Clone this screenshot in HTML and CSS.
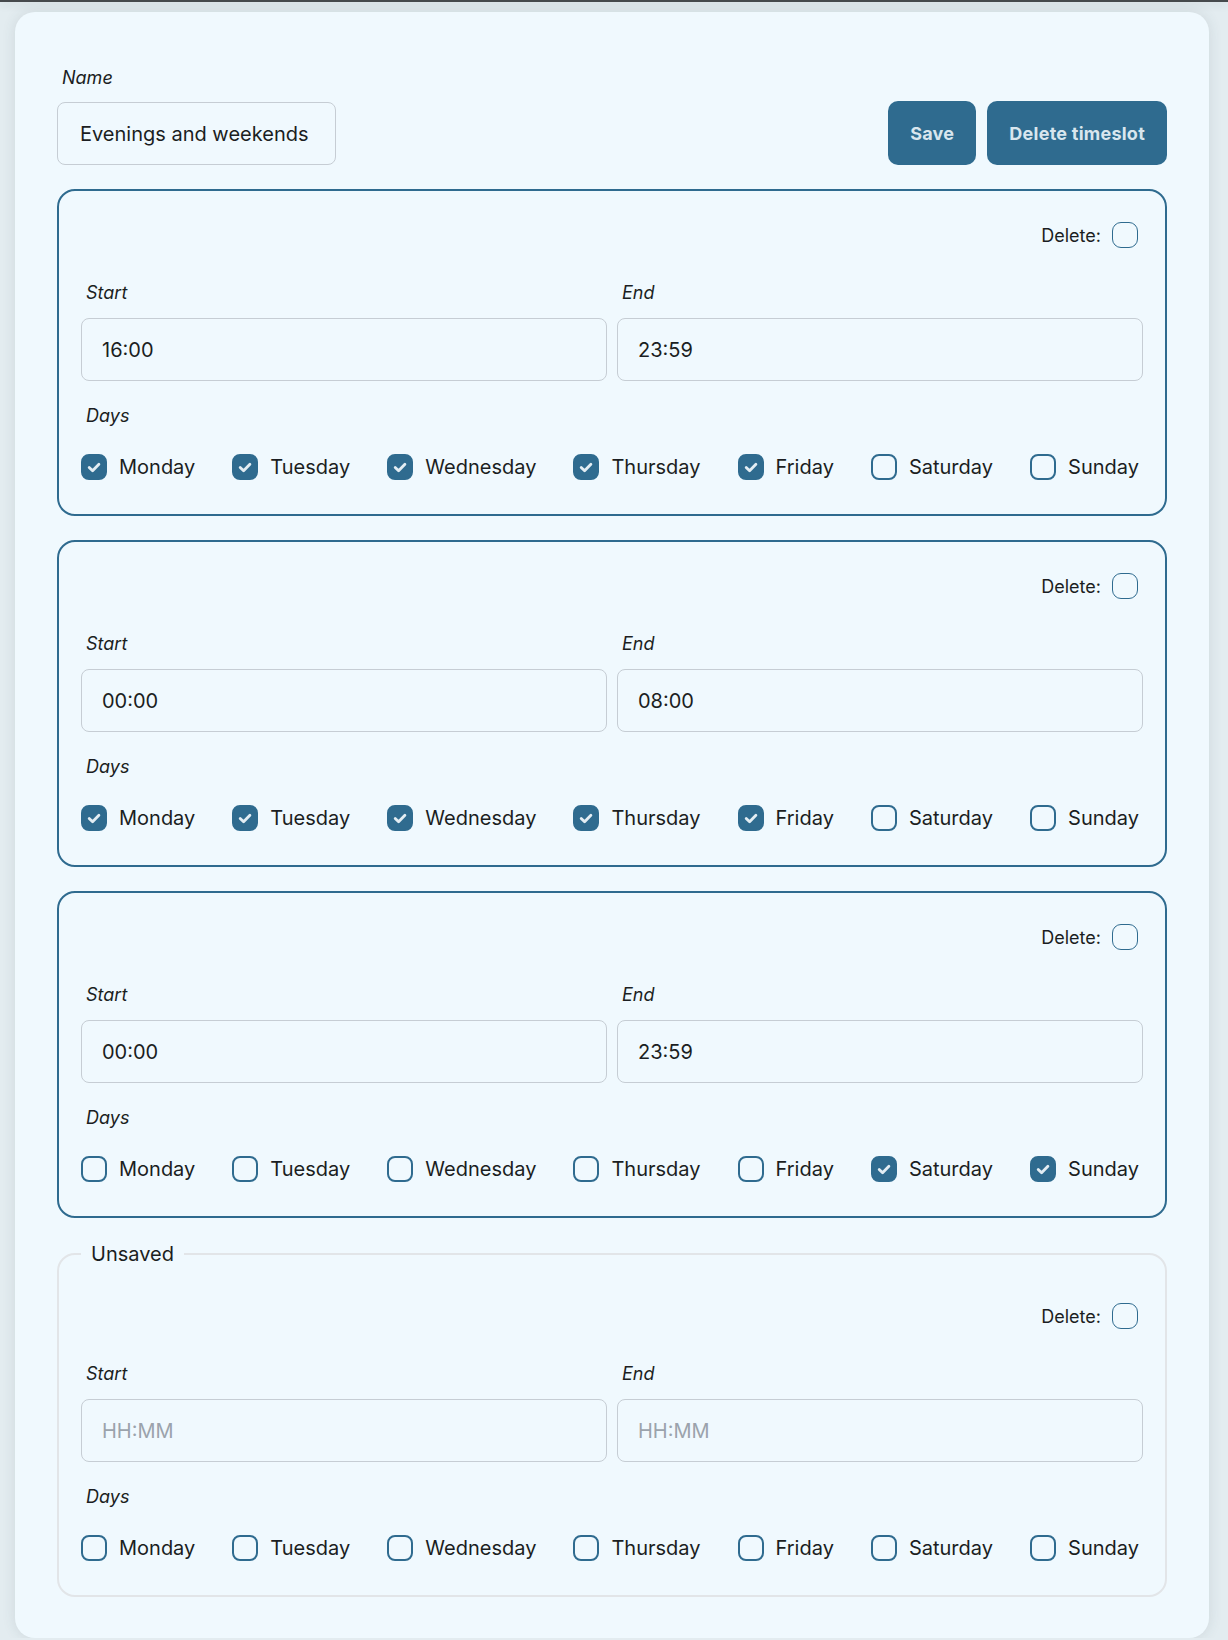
FILE: index.html
```html
<!DOCTYPE html>
<html lang="en">
<head>
<meta charset="utf-8">
<title>Timeslot</title>
<link rel="stylesheet" href="styles.css">
</head>
<body>
<div class="topbar"></div>
<main class="card">
  <div class="header">
    <div class="name-field">
      <label class="field-label">Name</label>
      <input class="text-input name-input" type="text" value="Evenings and weekends">
    </div>
    <div class="actions">
      <button class="btn">Save</button>
      <button class="btn">Delete timeslot</button>
    </div>
  </div>

  <fieldset class="slot">
    <div class="delete-row"><span class="delete-text">Delete:</span><span class="box small"></span></div>
    <div class="times">
      <div class="time-col"><label class="field-label">Start</label><input class="text-input" type="text" value="16:00"></div>
      <div class="time-col"><label class="field-label">End</label><input class="text-input" type="text" value="23:59"></div>
    </div>
    <div class="field-label days-label">Days</div>
    <div class="days">
      <span class="day"><span class="box checked"><svg viewBox="0 0 22 22"><path d="M6.2 11.4 L9.6 14.8 L15.9 8.2"/></svg></span>Monday</span>
      <span class="day"><span class="box checked"><svg viewBox="0 0 22 22"><path d="M6.2 11.4 L9.6 14.8 L15.9 8.2"/></svg></span>Tuesday</span>
      <span class="day"><span class="box checked"><svg viewBox="0 0 22 22"><path d="M6.2 11.4 L9.6 14.8 L15.9 8.2"/></svg></span>Wednesday</span>
      <span class="day"><span class="box checked"><svg viewBox="0 0 22 22"><path d="M6.2 11.4 L9.6 14.8 L15.9 8.2"/></svg></span>Thursday</span>
      <span class="day"><span class="box checked"><svg viewBox="0 0 22 22"><path d="M6.2 11.4 L9.6 14.8 L15.9 8.2"/></svg></span>Friday</span>
      <span class="day"><span class="box"></span>Saturday</span>
      <span class="day"><span class="box"></span>Sunday</span>
    </div>
  </fieldset>

  <fieldset class="slot">
    <div class="delete-row"><span class="delete-text">Delete:</span><span class="box small"></span></div>
    <div class="times">
      <div class="time-col"><label class="field-label">Start</label><input class="text-input" type="text" value="00:00"></div>
      <div class="time-col"><label class="field-label">End</label><input class="text-input" type="text" value="08:00"></div>
    </div>
    <div class="field-label days-label">Days</div>
    <div class="days">
      <span class="day"><span class="box checked"><svg viewBox="0 0 22 22"><path d="M6.2 11.4 L9.6 14.8 L15.9 8.2"/></svg></span>Monday</span>
      <span class="day"><span class="box checked"><svg viewBox="0 0 22 22"><path d="M6.2 11.4 L9.6 14.8 L15.9 8.2"/></svg></span>Tuesday</span>
      <span class="day"><span class="box checked"><svg viewBox="0 0 22 22"><path d="M6.2 11.4 L9.6 14.8 L15.9 8.2"/></svg></span>Wednesday</span>
      <span class="day"><span class="box checked"><svg viewBox="0 0 22 22"><path d="M6.2 11.4 L9.6 14.8 L15.9 8.2"/></svg></span>Thursday</span>
      <span class="day"><span class="box checked"><svg viewBox="0 0 22 22"><path d="M6.2 11.4 L9.6 14.8 L15.9 8.2"/></svg></span>Friday</span>
      <span class="day"><span class="box"></span>Saturday</span>
      <span class="day"><span class="box"></span>Sunday</span>
    </div>
  </fieldset>

  <fieldset class="slot">
    <div class="delete-row"><span class="delete-text">Delete:</span><span class="box small"></span></div>
    <div class="times">
      <div class="time-col"><label class="field-label">Start</label><input class="text-input" type="text" value="00:00"></div>
      <div class="time-col"><label class="field-label">End</label><input class="text-input" type="text" value="23:59"></div>
    </div>
    <div class="field-label days-label">Days</div>
    <div class="days">
      <span class="day"><span class="box"></span>Monday</span>
      <span class="day"><span class="box"></span>Tuesday</span>
      <span class="day"><span class="box"></span>Wednesday</span>
      <span class="day"><span class="box"></span>Thursday</span>
      <span class="day"><span class="box"></span>Friday</span>
      <span class="day"><span class="box checked"><svg viewBox="0 0 22 22"><path d="M6.2 11.4 L9.6 14.8 L15.9 8.2"/></svg></span>Saturday</span>
      <span class="day"><span class="box checked"><svg viewBox="0 0 22 22"><path d="M6.2 11.4 L9.6 14.8 L15.9 8.2"/></svg></span>Sunday</span>
    </div>
  </fieldset>

  <fieldset class="slot unsaved">
    <legend>Unsaved</legend>
    <div class="delete-row"><span class="delete-text">Delete:</span><span class="box small"></span></div>
    <div class="times">
      <div class="time-col"><label class="field-label">Start</label><input class="text-input" type="text" placeholder="HH:MM"></div>
      <div class="time-col"><label class="field-label">End</label><input class="text-input" type="text" placeholder="HH:MM"></div>
    </div>
    <div class="field-label days-label">Days</div>
    <div class="days">
      <span class="day"><span class="box"></span>Monday</span>
      <span class="day"><span class="box"></span>Tuesday</span>
      <span class="day"><span class="box"></span>Wednesday</span>
      <span class="day"><span class="box"></span>Thursday</span>
      <span class="day"><span class="box"></span>Friday</span>
      <span class="day"><span class="box"></span>Saturday</span>
      <span class="day"><span class="box"></span>Sunday</span>
    </div>
  </fieldset>
</main>
</body>
</html>
```

FILE: styles.css
```css
* {
  box-sizing: border-box;
}

html, body {
  margin: 0;
  padding: 0;
}

body {
  background: #e3ecf0;
  font-family: Inter, "Noto Sans", "Liberation Sans", sans-serif;
  color: #1b1e22;
  overflow: hidden;
}

.topbar {
  height: 2px;
  background: #464a4d;
  box-shadow: 0 2px 8px rgba(40, 50, 55, 0.18);
}

.card {
  margin: 10px 19px 0 15px;
  background: #f0f9fe;
  border-radius: 20px;
  padding: 54px 42px 41px;
  box-shadow: 0 0 14px rgba(50, 70, 80, 0.12);
}

.header {
  display: flex;
  justify-content: space-between;
  align-items: flex-end;
  margin-bottom: 24px;
}

.name-field {
  display: flex;
  flex-direction: column;
  gap: 12px;
}

.field-label {
  font-style: italic;
  font-size: 18px;
  line-height: 24px;
  padding-left: 5px;
  color: #1b1e22;
}

.text-input {
  display: block;
  width: 100%;
  height: 63px;
  border: 1px solid #c6cdd4;
  border-radius: 8px;
  background: #f0f9fe;
  font-family: Inter, "Noto Sans", "Liberation Sans", sans-serif;
  font-size: 20px;
  color: #1b1e22;
  padding: 0 20px;
  outline: none;
}

.text-input::placeholder {
  color: #9ba3ac;
}

.name-input {
  width: 279px;
  padding: 0 22px;
}

.actions {
  display: flex;
  gap: 11px;
}

.btn {
  height: 64px;
  padding: 0 22px;
  border: none;
  border-radius: 10px;
  background: #2f6b8f;
  color: #d9e6ee;
  font-family: Inter, "Noto Sans", "Liberation Sans", sans-serif;
  font-size: 18px;
  font-weight: 700;
  letter-spacing: 0.25px;
}

.slot {
  margin: 0 0 24px;
  min-width: 0;
  border: 2px solid #2f6b8f;
  border-radius: 18px;
  padding: 31px 22px 32px;
}

.slot.unsaved {
  border-color: #e2e5e8;
  padding-top: 37px;
  margin-bottom: 0;
}

.slot legend {
  font-size: 20px;
  line-height: 24px;
  padding: 0 10px;
  color: #1b1e22;
}

.delete-row {
  display: flex;
  justify-content: flex-end;
  align-items: center;
  gap: 11px;
  height: 26px;
  padding-right: 5px;
}

.delete-text {
  font-size: 18px;
}

.times {
  display: grid;
  grid-template-columns: 1fr 1fr;
  column-gap: 10px;
  margin-top: 33px;
}

.time-col .text-input {
  margin-top: 13px;
}

.days-label {
  margin-top: 23px;
}

.days {
  display: flex;
  justify-content: space-between;
  align-items: center;
  height: 30px;
  margin-top: 24px;
  padding-right: 4px;
}

.day {
  display: flex;
  align-items: center;
  gap: 12px;
  font-size: 20px;
}

.box {
  width: 26px;
  height: 26px;
  border: 2px solid #2f6b8f;
  border-radius: 8px;
  display: inline-flex;
  flex: none;
}

.box.small {
  border-width: 1.5px;
  border-radius: 9px;
}

.box.checked {
  background: #2f6b8f;
}

.box svg {
  width: 22px;
  height: 22px;
}

.box svg path {
  fill: none;
  stroke: #e3edf3;
  stroke-width: 2.8;
  stroke-linecap: round;
  stroke-linejoin: round;
}
```
